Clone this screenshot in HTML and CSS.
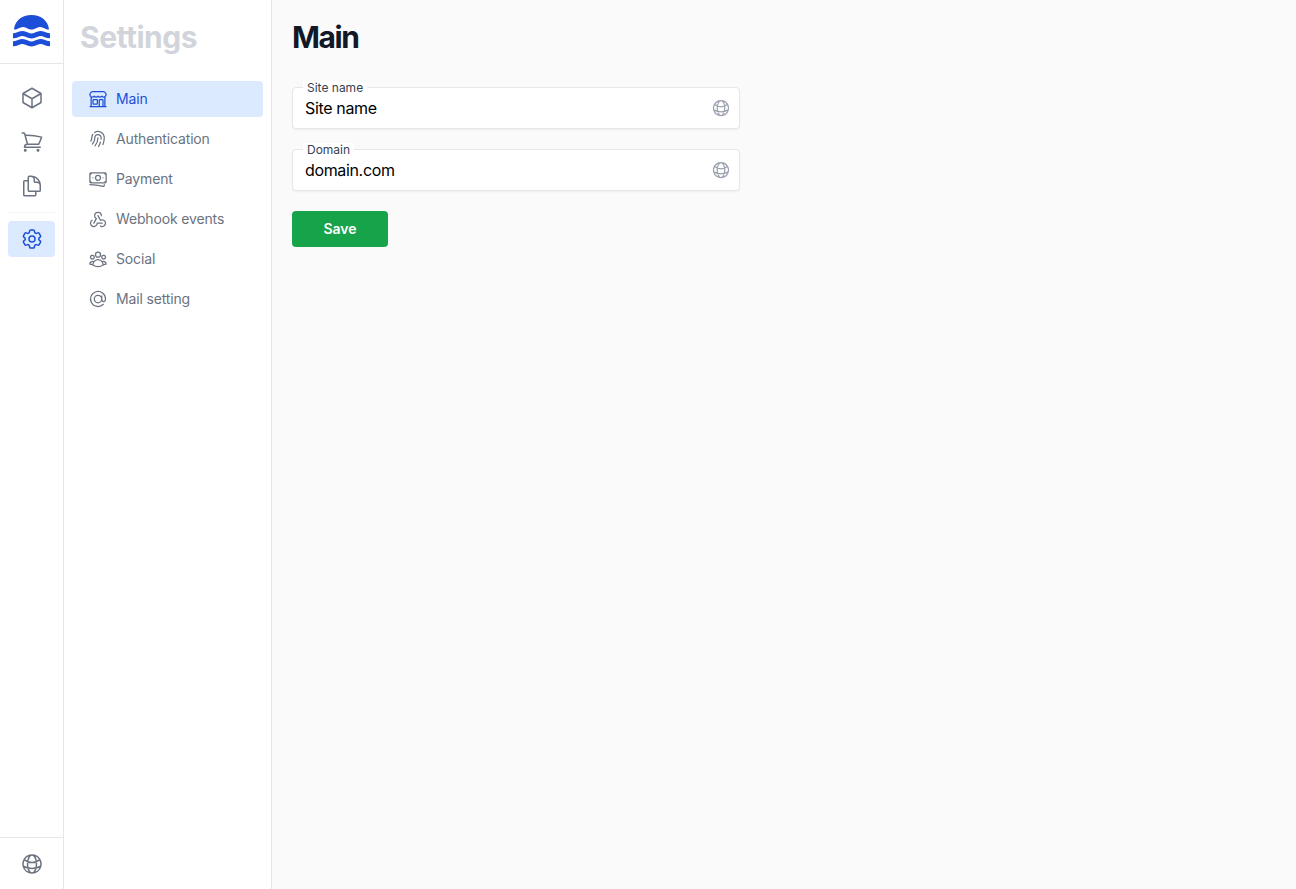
FILE: index.html
```html
<!DOCTYPE html>
<html lang="en">

<head>
  <meta charset="UTF-8" />
  <meta name="viewport" content="width=device-width, initial-scale=1.0" />
  <title>Settings</title>
  <link rel="stylesheet" href="styles.css">
</head>

<body>
  <div class="app">
    <aside class="rail">
      <div class="rail-logo">
        <svg class="logo" viewBox="0 0 37 32" aria-hidden="true">
          <path class="logo-sun" d="M1 14.5C1.5 6 9 0 18.5 0S35.500 6 36 14.500c-2.500 0-4-1-6-1.800-2-.8-4-1-6 0s-3.500 1.800-5.500 1.800-3.500-.8-5.500-1.800-4-.8-6 0-3.500 1.800-6 1.800Z" />
          <path class="logo-wave" d="M0 20.800c3 0 4.500-1 6.500-1.800s3.500-.8 5.500 0 4 2 6.500 2 4.500-1.200 6.500-2 3.500-.8 5.500 0 3.500 1.800 6.500 1.800" />
          <path class="logo-wave" d="M0 28.800c3 0 4.500-1 6.500-1.800s3.500-.8 5.500 0 4 2 6.500 2 4.500-1.200 6.500-2 3.500-.8 5.500 0 3.500 1.800 6.500 1.800" />
        </svg>
      </div>
      <nav class="rail-nav">
        <a class="rail-link" href="#">
          <svg class="icon" viewBox="0 0 24 24"><path d="m21 7.500-9-5.250L3 7.500m18 0-9 5.250m9-5.250v9l-9 5.250M3 7.500l9 5.250M3 7.500v9l9 5.250m0-9v9" /></svg>
        </a>
        <a class="rail-link" href="#">
          <svg class="icon" viewBox="0 0 24 24"><path d="M2.250 3h1.386c.51 0 .955.343 1.087.835l.383 1.437M7.500 14.250a3 3 0 0 0-3 3h15.750m-12.750-3h11.218c1.121-2.300 2.100-4.684 2.924-7.138a60.114 60.114 0 0 0-16.536-1.840M7.500 14.250 5.106 5.272M6 20.250a.75.75 0 1 1-1.500 0 .75.75 0 0 1 1.500 0Zm12.750 0a.75.75 0 1 1-1.500 0 .75.75 0 0 1 1.500 0Z" /></svg>
        </a>
        <a class="rail-link" href="#">
          <svg class="icon" viewBox="0 0 24 24"><path d="M15.750 17.250v3.375c0 .621-.504 1.125-1.125 1.125h-9.750a1.125 1.125 0 0 1-1.125-1.125V7.875c0-.621.504-1.125 1.125-1.125H6.750a9.060 9.060 0 0 1 1.500.124m7.500 10.376h3.375c.621 0 1.125-.504 1.125-1.125V11.250c0-4.460-3.243-8.161-7.500-8.876a9.060 9.060 0 0 0-1.500-.124H9.375c-.621 0-1.125.504-1.125 1.125v3.500m7.500 10.375H9.375a1.125 1.125 0 0 1-1.125-1.125v-9.250m12 6.625v-1.875a3.375 3.375 0 0 0-3.375-3.375h-1.500a1.125 1.125 0 0 1-1.125-1.125v-1.500a3.375 3.375 0 0 0-3.375-3.375H9.750" /></svg>
        </a>
        <hr class="rail-divider" />
        <a class="rail-link active" href="#">
          <svg class="icon" viewBox="0 0 24 24"><path d="M9.594 3.940c.09-.542.56-.94 1.110-.94h2.593c.55 0 1.020.398 1.110.94l.213 1.281c.063.374.313.686.645.870.074.04.147.083.22.127.325.196.72.257 1.075.124l1.217-.456a1.125 1.125 0 0 1 1.370.49l1.296 2.247a1.125 1.125 0 0 1-.26 1.431l-1.003.827c-.293.241-.438.613-.43.992a7.723 7.723 0 0 1 0 .255c-.008.378.137.75.43.991l1.004.827c.424.35.534.955.26 1.430l-1.298 2.247a1.125 1.125 0 0 1-1.369.491l-1.217-.456c-.355-.133-.75-.072-1.076.124a6.470 6.470 0 0 1-.22.128c-.331.183-.581.495-.644.869l-.213 1.281c-.09.543-.56.94-1.110.94h-2.594c-.55 0-1.019-.398-1.110-.94l-.213-1.281c-.062-.374-.312-.686-.644-.87a6.520 6.520 0 0 1-.22-.127c-.325-.196-.72-.257-1.076-.124l-1.217.456a1.125 1.125 0 0 1-1.369-.49l-1.297-2.247a1.125 1.125 0 0 1 .26-1.431l1.004-.827c.292-.24.437-.613.43-.991a6.932 6.932 0 0 1 0-.255c.007-.38-.138-.751-.43-.992l-1.004-.827a1.125 1.125 0 0 1-.26-1.430l1.297-2.247a1.125 1.125 0 0 1 1.370-.491l1.216.456c.356.133.751.072 1.076-.124.072-.044.146-.086.22-.128.332-.183.582-.495.644-.869l.214-1.280Z" /><path d="M15 12a3 3 0 1 1-6 0 3 3 0 0 1 6 0Z" /></svg>
        </a>
      </nav>
      <div class="rail-bottom">
        <svg class="icon" viewBox="0 0 24 24"><path d="M12 21a9.004 9.004 0 0 0 8.716-6.747M12 21a9.004 9.004 0 0 1-8.716-6.747M12 21c2.485 0 4.500-4.030 4.500-9S14.485 3 12 3m0 18c-2.485 0-4.500-4.030-4.500-9S9.515 3 12 3m0 0a8.997 8.997 0 0 1 7.843 4.582M12 3a8.997 8.997 0 0 0-7.843 4.582m15.686 0A11.953 11.953 0 0 1 12 10.500c-2.998 0-5.740-1.100-7.843-2.918m15.686 0A8.959 8.959 0 0 1 21 12c0 .778-.099 1.533-.284 2.253m0 0A17.919 17.919 0 0 1 12 16.500c-3.162 0-6.133-.815-8.716-2.247m0 0A9.015 9.015 0 0 1 3 12c0-1.605.42-3.113 1.157-4.418" /></svg>
      </div>
    </aside>

    <aside class="sidebar">
      <h2 class="sidebar-title">Settings</h2>
      <nav class="side-nav">
        <a class="side-link active" href="#">
          <svg class="icon small" viewBox="0 0 24 24"><path d="M13.500 21v-7.500a.75.75 0 0 1 .75-.75h3a.75.75 0 0 1 .75.75V21m-4.500 0H2.360m11.140 0H18m0 0h3.640m-1.390 0V9.349M3.750 21V9.349m0 0a3.001 3.001 0 0 0 3.750-.615A2.993 2.993 0 0 0 9.750 9.750c.896 0 1.700-.393 2.250-1.016a2.993 2.993 0 0 0 2.250 1.016c.896 0 1.700-.393 2.250-1.015a3.001 3.001 0 0 0 3.750.614m-16.500 0a3.004 3.004 0 0 1-.621-4.720l1.189-1.190A1.500 1.500 0 0 1 5.378 3h13.243a1.500 1.500 0 0 1 1.060.44l1.190 1.189a3 3 0 0 1-.621 4.720M6.750 18h3.750a.75.75 0 0 0 .75-.75V13.500a.75.75 0 0 0-.75-.75H6.750a.75.75 0 0 0-.75.75v3.750c0 .414.336.75.75.75Z" /></svg>
          <span class="side-text">Main</span>
        </a>
        <a class="side-link" href="#">
          <svg class="icon small" viewBox="0 0 24 24"><path d="M7.864 4.243A7.500 7.500 0 0 1 19.500 10.500c0 2.920-.556 5.709-1.568 8.268M5.742 6.364A7.465 7.465 0 0 0 4.500 10.500a7.464 7.464 0 0 1-1.150 3.993m1.989 3.559A11.209 11.209 0 0 0 8.250 10.500a3.750 3.750 0 1 1 7.500 0c0 .527-.021 1.049-.064 1.565M12 10.500a14.940 14.940 0 0 1-3.600 9.750m6.633-4.596a18.666 18.666 0 0 1-2.485 5.330" /></svg>
          <span class="side-text">Authentication</span>
        </a>
        <a class="side-link" href="#">
          <svg class="icon small" viewBox="0 0 24 24"><path d="M2.250 18.750a60.070 60.070 0 0 1 15.797 2.101c.727.198 1.453-.342 1.453-1.096V18.750M3.750 4.500v.75A.75.75 0 0 1 3 6h-.75m0 0v-.375c0-.621.504-1.125 1.125-1.125H20.250M2.250 6v9m18-10.500v.75c0 .414.336.75.75.75h.75m-1.500-1.500h.375c.621 0 1.125.504 1.125 1.125v9.750c0 .621-.504 1.125-1.125 1.125h-.375m1.500-1.500H21a.75.75 0 0 0-.75.75v.75m0 0H3.750m0 0h-.375a1.125 1.125 0 0 1-1.125-1.125V15m1.500 1.500v-.75A.75.75 0 0 0 3 15h-.75M15 10.500a3 3 0 1 1-6 0 3 3 0 0 1 6 0Zm3 0h.008v.008H18V10.500Zm-12 0h.008v.008H6V10.500Z" /></svg>
          <span class="side-text">Payment</span>
        </a>
        <a class="side-link" href="#">
          <svg class="icon small" viewBox="0 0 24 24"><path d="M4.876 13.610a4 4 0 1 0 6.124 3.390h6" /><path d="M15.066 20.502a4 4 0 1 0 1.934-7.502c-.706 0-1.424.179-2 .5l-3-5.500" /><path d="M16 8a4 4 0 1 0-8 0c0 1.506.77 2.818 2 3.500l-3 5.500" /></svg>
          <span class="side-text">Webhook events</span>
        </a>
        <a class="side-link" href="#">
          <svg class="icon small" viewBox="0 0 24 24"><path d="M18 18.720a9.094 9.094 0 0 0 3.741-.479 3 3 0 0 0-4.682-2.720m.94 3.198.001.031c0 .225-.012.447-.037.666A11.944 11.944 0 0 1 12 21c-2.170 0-4.207-.576-5.963-1.584A6.062 6.062 0 0 1 6 18.719m12 0a5.971 5.971 0 0 0-.941-3.197m0 0A5.995 5.995 0 0 0 12 12.750a5.995 5.995 0 0 0-5.058 2.772m0 0a3 3 0 0 0-4.681 2.720 8.986 8.986 0 0 0 3.740.477m.94-3.197a5.971 5.971 0 0 0-.94 3.197M15 6.750a3 3 0 1 1-6 0 3 3 0 0 1 6 0Zm6 3a2.250 2.250 0 1 1-4.500 0 2.250 2.250 0 0 1 4.500 0Zm-13.500 0a2.250 2.250 0 1 1-4.500 0 2.250 2.250 0 0 1 4.500 0Z" /></svg>
          <span class="side-text">Social</span>
        </a>
        <a class="side-link" href="#">
          <svg class="icon small" viewBox="0 0 24 24"><path d="M16.500 12a4.500 4.500 0 1 1-9 0 4.500 4.500 0 0 1 9 0Zm0 0c0 1.657 1.007 3 2.250 3S21 13.657 21 12a9 9 0 1 0-2.636 6.364M16.500 12V8.250" /></svg>
          <span class="side-text">Mail setting</span>
        </a>
      </nav>
    </aside>

    <main class="content">
      <h1 class="page-title">Main</h1>
      <form class="form">
        <div class="field">
          <label class="field-label" for="site-name">Site name</label>
          <input class="field-input" id="site-name" type="text" value="Site name" />
          <svg class="icon globe" viewBox="0 0 24 24"><path d="M12 21a9.004 9.004 0 0 0 8.716-6.747M12 21a9.004 9.004 0 0 1-8.716-6.747M12 21c2.485 0 4.500-4.030 4.500-9S14.485 3 12 3m0 18c-2.485 0-4.500-4.030-4.500-9S9.515 3 12 3m0 0a8.997 8.997 0 0 1 7.843 4.582M12 3a8.997 8.997 0 0 0-7.843 4.582m15.686 0A11.953 11.953 0 0 1 12 10.500c-2.998 0-5.740-1.100-7.843-2.918m15.686 0A8.959 8.959 0 0 1 21 12c0 .778-.099 1.533-.284 2.253m0 0A17.919 17.919 0 0 1 12 16.500c-3.162 0-6.133-.815-8.716-2.247m0 0A9.015 9.015 0 0 1 3 12c0-1.605.42-3.113 1.157-4.418" /></svg>
        </div>
        <div class="field">
          <label class="field-label" for="domain">Domain</label>
          <input class="field-input" id="domain" type="text" value="domain.com" />
          <svg class="icon globe" viewBox="0 0 24 24"><path d="M12 21a9.004 9.004 0 0 0 8.716-6.747M12 21a9.004 9.004 0 0 1-8.716-6.747M12 21c2.485 0 4.500-4.030 4.500-9S14.485 3 12 3m0 18c-2.485 0-4.500-4.030-4.500-9S9.515 3 12 3m0 0a8.997 8.997 0 0 1 7.843 4.582M12 3a8.997 8.997 0 0 0-7.843 4.582m15.686 0A11.953 11.953 0 0 1 12 10.500c-2.998 0-5.740-1.100-7.843-2.918m15.686 0A8.959 8.959 0 0 1 21 12c0 .778-.099 1.533-.284 2.253m0 0A17.919 17.919 0 0 1 12 16.500c-3.162 0-6.133-.815-8.716-2.247m0 0A9.015 9.015 0 0 1 3 12c0-1.605.42-3.113 1.157-4.418" /></svg>
        </div>
        <button class="save-button" type="button">Save</button>
      </form>
    </main>
  </div>
</body>

</html>
```

FILE: styles.css
```css
* {
  box-sizing: border-box;
}

html,
body {
  height: 100%;
}

body {
  margin: 0;
  font-family: Inter, "Liberation Sans", sans-serif;
  background-color: #fafafa;
  color: #111827;
}

a {
  text-decoration: none;
}

.app {
  display: flex;
  height: 100vh;
}

.icon {
  display: block;
  width: 24px;
  height: 24px;
  flex: none;
  fill: none;
  stroke: currentColor;
  stroke-width: 1.5;
  stroke-linecap: round;
  stroke-linejoin: round;
}

.icon.small {
  width: 20px;
  height: 20px;
}

/* left icon rail */
.rail {
  display: flex;
  flex-direction: column;
  width: 64px;
  flex: none;
  background-color: #fff;
  border-right: 1px solid #e5e7eb;
  color: #6b7280;
}

.rail-logo {
  display: flex;
  justify-content: center;
  height: 64px;
  padding-top: 15px;
  border-bottom: 1px solid #e5e7eb;
}

.logo {
  width: 37px;
  height: 32px;
}

.logo-sun {
  fill: #1d4ed8;
}

.logo-wave {
  fill: none;
  stroke: #1d4ed8;
  stroke-width: 5;
}

.rail-nav {
  display: flex;
  flex-direction: column;
  align-items: center;
  flex: 1;
  padding: 16px 8px 0;
}

.rail-link {
  display: flex;
  justify-content: center;
  align-items: center;
  width: 47px;
  height: 36px;
  margin-bottom: 8px;
  border-radius: 4px;
  color: #6b7280;
}

.rail-link.active {
  background-color: #dbeafe;
  color: #1d4ed8;
}

.rail-divider {
  width: 47px;
  margin: 0 0 8px;
  border: none;
  border-top: 1px solid #f3f4f6;
}

.rail-bottom {
  display: flex;
  justify-content: center;
  align-items: center;
  height: 52px;
  border-top: 1px solid #e5e7eb;
}

/* settings sidebar */
.sidebar {
  width: 208px;
  flex: none;
  padding: 0 8px;
  background-color: #fff;
  border-right: 1px solid #e5e7eb;
}

.sidebar-title {
  height: 81px;
  margin: 0;
  padding: 19px 0 0 8px;
  font-size: 30px;
  line-height: 36px;
  font-weight: 700;
  letter-spacing: -0.5px;
  color: #d1d5db;
}

.side-nav {
  display: flex;
  flex-direction: column;
  gap: 4px;
}

.side-link {
  display: flex;
  align-items: center;
  gap: 8px;
  height: 36px;
  padding: 0 16px;
  border-radius: 4px;
  font-size: 14px;
  font-weight: 400;
  letter-spacing: -0.15px;
  color: #6b7280;
}

.side-text {
  padding-bottom: 2px;
}

.side-link.active {
  background-color: #dbeafe;
  color: #1d4ed8;
}

/* main panel */
.content {
  flex: 1;
  padding: 19px 20px;
}

.page-title {
  margin: 0 0 32px;
  font-size: 30px;
  line-height: 36px;
  font-weight: 700;
  letter-spacing: -1.4px;
  color: #111827;
}

.form {
  display: flex;
  flex-direction: column;
  align-items: flex-start;
  gap: 20px;
  width: 448px;
}

.field {
  position: relative;
  width: 100%;
}

.field-label {
  position: absolute;
  top: -6px;
  left: 11px;
  padding: 0 4px;
  font-size: 12px;
  line-height: 14px;
  background-color: #fff;
  color: #374151;
}

.field-input {
  display: block;
  width: 100%;
  height: 42px;
  padding: 0 40px 0 12px;
  font-family: inherit;
  font-size: 16px;
  letter-spacing: -0.35px;
  color: #000;
  background-color: #fff;
  border: 1px solid #e5e7eb;
  border-radius: 4px;
  box-shadow: 0 1px 2px rgba(0, 0, 0, 0.05);
  outline: none;
}

.globe {
  position: absolute;
  top: 11px;
  right: 9px;
  width: 20px;
  height: 20px;
  color: #9ca3af;
}

.save-button {
  width: 96px;
  height: 36px;
  padding: 0 0 2px;
  font-family: inherit;
  font-size: 14px;
  font-weight: 600;
  color: #fff;
  background-color: #16a34a;
  border: none;
  border-radius: 4px;
}
```
